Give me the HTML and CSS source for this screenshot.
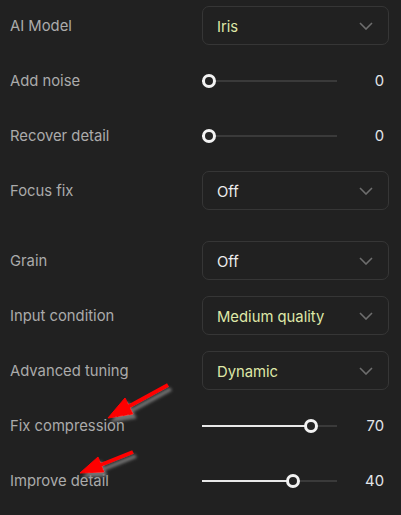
FILE: index.html
```html
<!DOCTYPE html>
<html lang="en">
<head>
    <meta charset="UTF-8">
    <meta name="viewport" content="width=device-width, initial-scale=1.0">
    <title>Enhance settings</title>
    <link rel="stylesheet" href="styles.css">
</head>

<body>
    <div class="panel">
        <div class="row">
            <span class="label">AI Model</span>
            <div class="select"><span class="value accent">Iris</span><svg class="chevron" viewBox="0 0 14 8"><path d="M1 1l6 6 6-6"/></svg></div>
        </div>
        <div class="row">
            <span class="label">Add noise</span>
            <div class="slider">
                <div class="track"><div class="fill" style="width: 7px"></div><div class="thumb" style="left: 0px"></div></div>
                <span class="num">0</span>
            </div>
        </div>
        <div class="row">
            <span class="label">Recover detail</span>
            <div class="slider">
                <div class="track"><div class="fill" style="width: 7px"></div><div class="thumb" style="left: 0px"></div></div>
                <span class="num">0</span>
            </div>
        </div>
        <div class="row">
            <span class="label">Focus fix</span>
            <div class="select"><span class="value">Off</span><svg class="chevron" viewBox="0 0 14 8"><path d="M1 1l6 6 6-6"/></svg></div>
        </div>
        <div class="row spaced">
            <span class="label">Grain</span>
            <div class="select"><span class="value">Off</span><svg class="chevron" viewBox="0 0 14 8"><path d="M1 1l6 6 6-6"/></svg></div>
        </div>
        <div class="row">
            <span class="label">Input condition</span>
            <div class="select"><span class="value accent">Medium quality</span><svg class="chevron" viewBox="0 0 14 8"><path d="M1 1l6 6 6-6"/></svg></div>
        </div>
        <div class="row">
            <span class="label">Advanced tuning</span>
            <div class="select"><span class="value accent">Dynamic</span><svg class="chevron" viewBox="0 0 14 8"><path d="M1 1l6 6 6-6"/></svg></div>
        </div>
        <div class="row">
            <span class="label">Fix compression</span>
            <div class="slider">
                <div class="track"><div class="fill" style="width: 109px"></div><div class="thumb" style="left: 102px"></div></div>
                <span class="num">70</span>
            </div>
        </div>
        <div class="row">
            <span class="label">Improve detail</span>
            <div class="slider">
                <div class="track"><div class="fill" style="width: 91px"></div><div class="thumb" style="left: 84px"></div></div>
                <span class="num">40</span>
            </div>
        </div>
    </div>

    <!-- red annotation arrows -->
    <svg class="arrows" width="401" height="515" viewBox="0 0 401 515">
        <defs>
            <filter id="shade" x="-20%" y="-20%" width="160%" height="160%">
                <feDropShadow dx="3" dy="4" stdDeviation="1.6" flood-color="#7a7a7a" flood-opacity="0.9"/>
            </filter>
        </defs>
        <g filter="url(#shade)" fill="#ff0000" stroke="#ff0000">
            <line x1="168" y1="385" x2="126" y2="408" stroke-width="4"/>
            <polygon points="108,418 133,414 125,398" stroke-width="1"/>
            <line x1="133" y1="452" x2="98" y2="466" stroke-width="4"/>
            <polygon points="80,473 104,472 98,457" stroke-width="1"/>
        </g>
    </svg>
</body>
</html>
```

FILE: styles.css
```css
* {
    margin: 0;
    padding: 0;
    box-sizing: border-box;
}

body {
    background: #212121;
    font-family: Inter, "Noto Sans", sans-serif;
    font-size: 14.8px;
    width: 401px;
    height: 515px;
    overflow: hidden;
    position: relative;
}

.panel {
    display: flex;
    flex-direction: column;
    gap: 16px;
    padding: 6px 12px 0 10px;
}

.row {
    display: grid;
    grid-template-columns: 192px 187px;
    align-items: center;
    height: 39px;
}

.row.spaced {
    margin-top: 15px;
}

.label {
    color: #ababab;
}

/* dropdown */
.select {
    height: 39px;
    border: 1px solid #363636;
    border-radius: 7px;
    display: flex;
    align-items: center;
    justify-content: space-between;
    padding: 0 15px 0 14px;
}

.value {
    color: #ececec;
    font-size: 14.8px;
    padding-top: 2px;
}

.value.accent {
    color: #dfe8a8;
}

.chevron {
    width: 14px;
    height: 8px;
    fill: none;
    stroke: #6e6e6e;
    stroke-width: 1.6;
}

/* slider */
.slider {
    display: flex;
    align-items: center;
    justify-content: space-between;
    padding-right: 5px;
}

.track {
    position: relative;
    width: 135px;
    height: 2px;
    background: #3a3a3a;
}

.fill {
    height: 2px;
    background: #e8e8e8;
}

.thumb {
    position: absolute;
    top: -6px;
    width: 14px;
    height: 14px;
    border-radius: 50%;
    border: 3px solid #f2f2f2;
    background: #232323;
}

.num {
    color: #e2e6ea;
    font-size: 14.8px;
}

.arrows {
    position: absolute;
    left: 0;
    top: 0;
    pointer-events: none;
}
```
